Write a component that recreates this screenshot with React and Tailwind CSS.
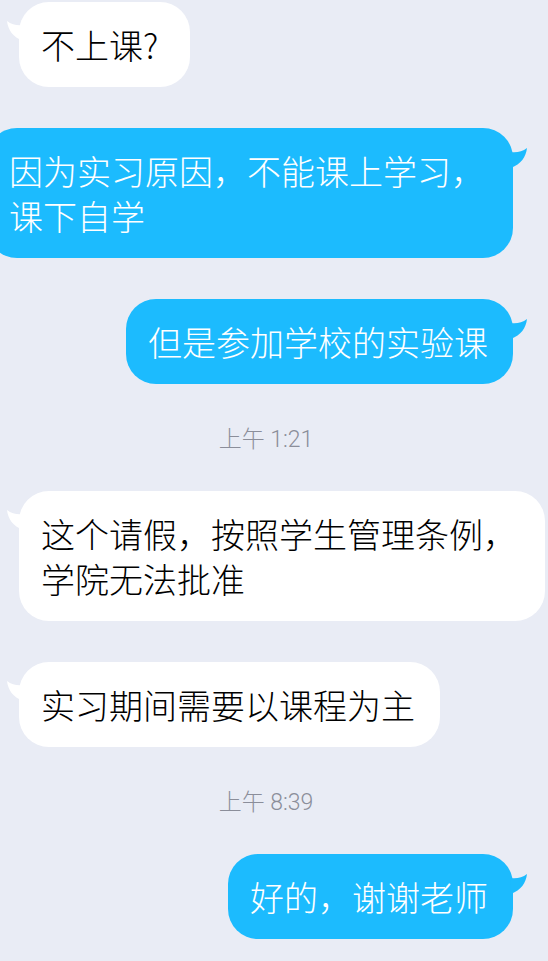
import React from "react";

const font = { fontFamily: '"Noto Sans CJK SC", "Noto Sans", sans-serif' };
const timeFont = { fontFamily: 'Roboto, "Noto Sans CJK SC", sans-serif' };

function Tail({ side }) {
	// small horn that sticks out of the bubble near its top corner
	if (side === "right") {
		return (
			<svg
				className="absolute -right-[15px] top-[19px]"
				width="18"
				height="22"
				viewBox="0 0 18 22">
				<path d="M0 5 C6 6 12 5 17 1 C16 10 11 17 1 21 Z" fill="#1cbbfe" />
			</svg>
		);
	}
	return (
		<svg
			className="absolute -left-[13px] top-[18px]"
			width="18"
			height="22"
			viewBox="0 0 18 22">
			<path d="M18 5 C12 6 6 5 1 1 C2 10 7 17 17 21 Z" fill="#ffffff" />
		</svg>
	);
}

function Bubble({ side, children, wide, extraPad }) {
	const isRight = side === "right";
	return (
		<div className={`flex ${isRight ? "justify-end pr-[35px]" : "justify-start pl-[19px]"}`}>
			<div
				className={`relative shrink-0 rounded-[30px] pl-[22px] pt-[20px] pb-[20px] text-[34px] font-light leading-[45px] ${
					isRight ? "bg-[#1cbbfe] text-white" : "bg-white text-black"
				} ${wide ? "w-[526px]" : "w-fit"} ${extraPad ? "pr-[32px]" : "pr-[25px]"}`}>
				<Tail side={side} />
				<div className="relative whitespace-nowrap">{children}</div>
			</div>
		</div>
	);
}

function Time({ children }) {
	return (
		<div
			className="flex h-[107px] items-center justify-center pr-[16px] pt-[5px] text-[23px] font-light text-[#8b8e9a]"
			style={timeFont}>
			{children}
		</div>
	);
}

export default function App() {
	return (
		<div className="h-[961px] w-full overflow-hidden bg-[#e9ecf5]" style={font}>
			<div className="flex flex-col pt-[2px]">
				<Bubble side="left" extraPad>
					不上课?
				</Bubble>
				<div className="mt-[41px]">
					<Bubble side="right" wide>
						因为实习原因，不能课上学习，
						<br />
						课下自学
					</Bubble>
				</div>
				<div className="mt-[41px]">
					<Bubble side="right">但是参加学校的实验课</Bubble>
				</div>
				<Time>上午 1:21</Time>
				<Bubble side="left" wide>
					这个请假，按照学生管理条例，
					<br />
					学院无法批准
				</Bubble>
				<div className="mt-[41px]">
					<Bubble side="left">实习期间需要以课程为主</Bubble>
				</div>
				<Time>上午 8:39</Time>
				<Bubble side="right">好的，谢谢老师</Bubble>
			</div>
		</div>
	);
}
